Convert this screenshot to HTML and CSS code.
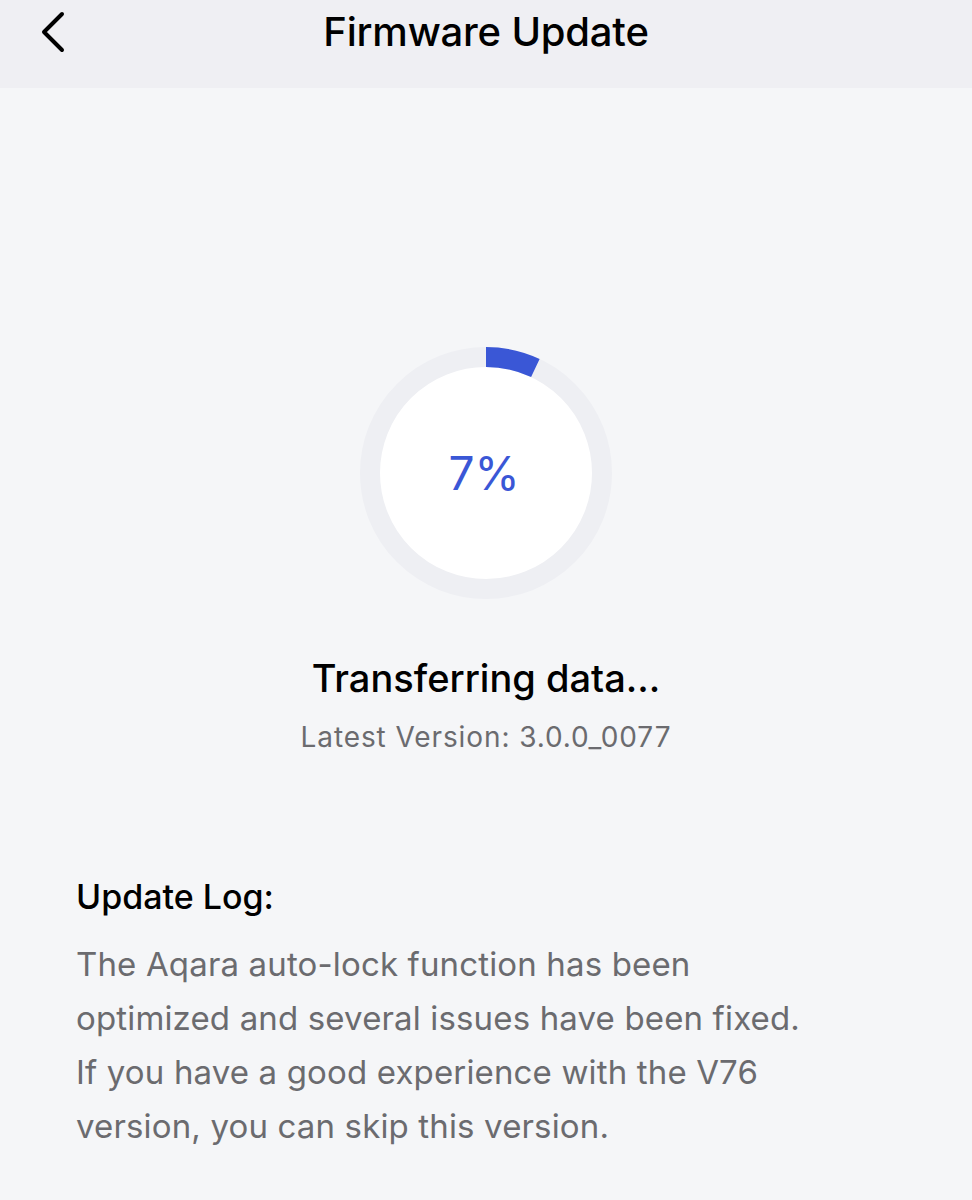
FILE: index.html
```html
<!DOCTYPE html>
<html lang="en">
<head>
<meta charset="utf-8">
<title>Firmware Update</title>
<link rel="stylesheet" href="styles.css">
</head>
<body>
<header class="topbar">
  <button class="back" aria-label="Back">
    <svg width="30" height="44" viewBox="0 0 30 44"><path d="M24 4 L6 22 L24 40" fill="none" stroke="#000" stroke-width="4" stroke-linecap="round" stroke-linejoin="round"/></svg>
  </button>
  <h1 class="title">Firmware Update</h1>
  <span></span>
</header>
<main class="content">
  <div class="progress">
    <svg class="ring" width="252" height="252" viewBox="0 0 252 252">
      <circle cx="126" cy="126" r="116" fill="#ffffff" stroke="#eeeff3" stroke-width="20"/>
      <circle cx="126" cy="126" r="116" fill="none" stroke="#3a57d6" stroke-width="20" pathLength="100" stroke-dasharray="7 93" transform="rotate(-90 126 126)"/>
    </svg>
    <span class="percent">7%</span>
  </div>
  <p class="status">Transferring data...</p>
  <p class="version">Latest Version: 3.0.0_0077</p>
  <section class="log">
    <h2 class="log-title">Update Log:</h2>
    <p class="log-text">The Aqara auto-lock function has been optimized and several issues have been fixed. If you have a good experience with the V76 version, you can skip this version.</p>
  </section>
</main>
</body>
</html>
```

FILE: styles.css
```css
* { box-sizing: border-box; }
html, body { margin: 0; padding: 0; }
body {
  background: #f5f6f8;
  font-family: Inter, "Noto Sans", sans-serif;
  color: #000;
  width: 972px;
  min-height: 1200px;
}
.topbar {
  height: 88px;
  background: #efeff3;
  display: grid;
  grid-template-columns: 1fr auto 1fr;
  align-items: start;
}
.back {
  justify-self: start;
  margin: 10px 0 0 38px;
  padding: 0;
  border: 0;
  background: none;
  display: flex;
}
.title {
  margin: 10px 0 0;
  font-size: 40px;
  line-height: 44px;
  font-weight: 500;
  letter-spacing: -0.2px;
}
.content {
  display: flex;
  flex-direction: column;
  align-items: center;
}
.progress {
  margin-top: 259px;
  width: 252px;
  height: 252px;
  display: grid;
  place-items: center;
}
.ring, .percent { grid-area: 1 / 1; }
.percent {
  font-size: 46px;
  line-height: 1;
  color: #3a57d6;
  font-weight: 400;
  margin-left: -4px;
}
.status {
  margin: 57px 0 0;
  font-size: 38px;
  line-height: 44px;
  font-weight: 500;
  letter-spacing: 0;
}
.version {
  margin: 20px 0 0;
  font-size: 28px;
  line-height: 34px;
  color: #6b6b6f;
  letter-spacing: 0.9px;
}
.log {
  align-self: stretch;
  padding: 0 76px;
  margin-top: 123px;
}
.log-title {
  margin: 0;
  font-size: 34px;
  line-height: 40px;
  font-weight: 500;
}
.log-text {
  margin: 20px 0 0;
  font-size: 33px;
  line-height: 54px;
  color: #6b6b6f;
  letter-spacing: 0.15px;
  max-width: 735px;
}
```
